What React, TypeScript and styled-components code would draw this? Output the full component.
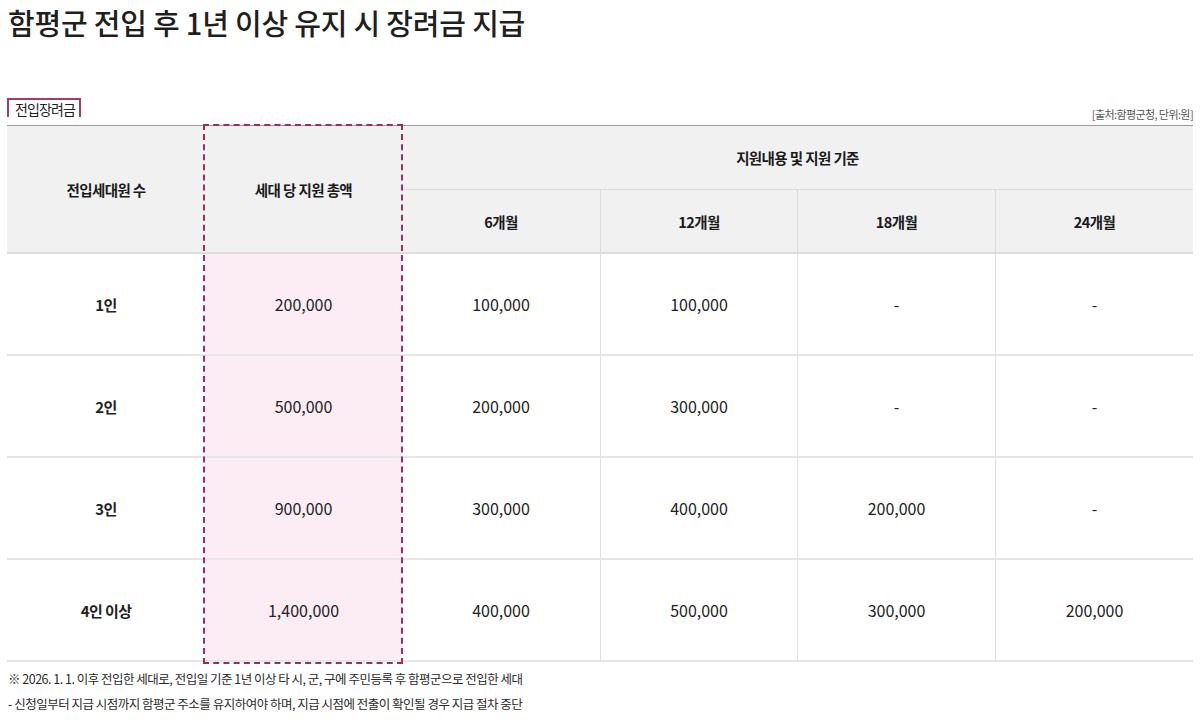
import { Fragment } from "react";
import styled, { createGlobalStyle } from "styled-components";

const GlobalStyle = createGlobalStyle`
  * { box-sizing: border-box; }
  body {
    margin: 0;
    background: #ffffff;
    color: #222;
    font-family: "Noto Sans CJK KR", "Noto Sans", sans-serif;
  }
`;

const Page = styled.div`
  width: 1200px;
  height: 727px;
  padding: 0 7px;
  overflow: hidden;
`;

const Title = styled.h1`
  margin: 0;
  padding: 2px 0 0 1px;
  font-size: 29px;
  font-weight: 500;
  letter-spacing: -0.2px;
  line-height: 40px;
  color: #1f1f1f;
`;

const Caption = styled.div`
  display: flex;
  justify-content: space-between;
  align-items: flex-end;
  margin-top: 51px;
  height: 32px;
`;

const Label = styled.span`
  display: inline-block;
  border: 2px solid #a53a6c;
  border-bottom: none;
  padding: 1px 4px 0 6px;
  height: 19px;
  font-size: 14px;
  line-height: 17px;
  letter-spacing: -0.9px;
  color: #222;
  margin-bottom: 8px;
`;

const Source = styled.span`
  font-size: 11px;
  letter-spacing: -0.6px;
  color: #555;
  margin-bottom: 3px;
`;

const Grid = styled.div`
  display: grid;
  grid-template-columns: 198px 197px 198px 197px 198px 198px;
  grid-template-rows: 64px 64px 102px 102px 102px 102px;
  border-top: 1px solid #9a9a9a;
`;

const Head = styled.div<{ $col: string; $row: string; $divider?: boolean; $bottom?: boolean }>`
  grid-column: ${(p) => p.$col};
  grid-row: ${(p) => p.$row};
  background: #f1f1f1;
  display: flex;
  align-items: center;
  justify-content: center;
  font-size: 14.5px;
  font-weight: 700;
  letter-spacing: -0.6px;
  color: #1a1a1a;
  border-left: ${(p) => (p.$divider ? "1px solid #dcdcdc" : "none")};
  border-bottom: ${(p) => (p.$bottom ? "2px solid #dedede" : "1px solid #dcdcdc")};
`;

const Cell = styled.div<{ $col: number; $row: number; $strong?: boolean; $pink?: boolean; $divider?: boolean }>`
  grid-column: ${(p) => p.$col};
  grid-row: ${(p) => p.$row};
  display: flex;
  align-items: center;
  justify-content: center;
  font-size: ${(p) => (p.$strong ? "15px" : "16px")};
  font-weight: ${(p) => (p.$strong ? 700 : 400)};
  letter-spacing: ${(p) => (p.$strong ? "-0.6px" : "0")};
  color: #222;
  background: ${(p) => (p.$pink ? "#fcedf4" : "#fff")};
  border-left: ${(p) => (p.$divider ? "1px solid #e0e0e0" : "none")};
  border-bottom: 2px solid #e6e6e6;
`;

const Highlight = styled.div`
  grid-column: 2;
  grid-row: 1 / -1;
  margin: -2px -1px -2px -2px;
  border: 2.5px dashed #9b2d5f;
  pointer-events: none;
  z-index: 1;
`;

const Notes = styled.div`
  padding: 4px 0 0 1px;
  font-size: 12.5px;
  letter-spacing: -0.5px;
  line-height: 25px;
  color: #2a2a2a;
`;

interface IRow {
  people: string;
  total: string;
  steps: string[];
}

const rows: IRow[] = [
  { people: "1인", total: "200,000", steps: ["100,000", "100,000", "-", "-"] },
  { people: "2인", total: "500,000", steps: ["200,000", "300,000", "-", "-"] },
  { people: "3인", total: "900,000", steps: ["300,000", "400,000", "200,000", "-"] },
  { people: "4인 이상", total: "1,400,000", steps: ["400,000", "500,000", "300,000", "200,000"] },
];

const periods = ["6개월", "12개월", "18개월", "24개월"];

function App() {
  return (
    <>
      <GlobalStyle />
      <Page>
        <Title>함평군 전입 후 1년 이상 유지 시 장려금 지급</Title>
        <Caption>
          <Label>전입장려금</Label>
          <Source>[출처:함평군청, 단위:원]</Source>
        </Caption>
        <Grid>
          <Head $col="1" $row="1 / 3" $bottom>전입세대원 수</Head>
          <Head $col="2" $row="1 / 3" $bottom>세대 당 지원 총액</Head>
          <Head $col="3 / 7" $row="1">지원내용 및 지원 기준</Head>
          {periods.map((p, i) => (
            <Head key={p} $col={`${i + 3}`} $row="2" $divider={i > 0} $bottom>
              {p}
            </Head>
          ))}
          {rows.map((r, ri) => (
            <Fragment key={r.people}>
              <Cell $col={1} $row={ri + 3} $strong>{r.people}</Cell>
              <Cell $col={2} $row={ri + 3} $pink>{r.total}</Cell>
              {r.steps.map((s, i) => (
                <Cell key={i} $col={i + 3} $row={ri + 3} $divider={i > 0}>{s}</Cell>
              ))}
            </Fragment>
          ))}
          <Highlight />
        </Grid>
        <Notes>
          <div>※ 2026. 1. 1. 이후 전입한 세대로, 전입일 기준 1년 이상 타 시, 군, 구에 주민등록 후 함평군으로 전입한 세대</div>
          <div>- 신청일부터 지급 시점까지 함평군 주소를 유지하여야 하며, 지급 시점에 전출이 확인될 경우 지급 절차 중단</div>
        </Notes>
      </Page>
    </>
  );
}

export default App;
